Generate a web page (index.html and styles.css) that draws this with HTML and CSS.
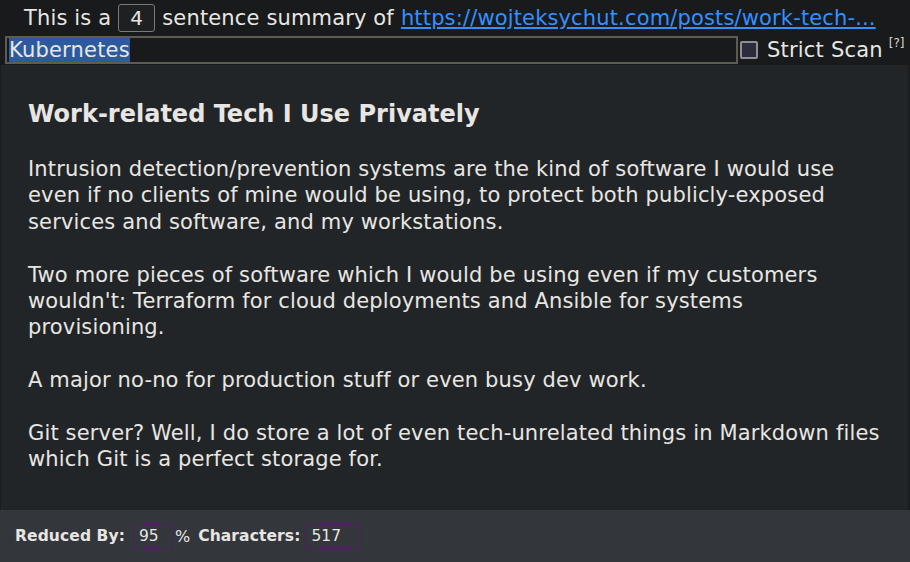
FILE: index.html
```html
<!DOCTYPE html>
<html>
<head>
<meta charset="utf-8">
<link rel="stylesheet" href="styles.css">
</head>
<body>
<div class="app">
  <div class="top">
    <span>This is a</span>
    <span class="num">4</span>
    <span>sentence summary of</span>
    <a class="link" href="#">https://wojteksychut.com/posts/work-tech-...</a>
  </div>
  <div class="search-row">
    <div class="search"><span class="sel">Kubernetes</span></div>
    <span class="check"></span>
    <span class="strict">Strict Scan</span>
    <sup class="help">[?]</sup>
  </div>
  <main class="panel">
    <h2 class="title">Work-related Tech I Use Privately</h2>
    <p>Intrusion detection/prevention systems are the kind of software I would use even if no clients of mine would be using, to protect both publicly-exposed services and software, and my workstations.</p>
    <p>Two more pieces of software which I would be using even if my customers wouldn't: Terraform for cloud deployments and Ansible for systems provisioning.</p>
    <p>A major no-no for production stuff or even busy dev work.</p>
    <p>Git server? Well, I do store a lot of even tech-unrelated things in Markdown files which Git is a perfect storage for.</p>
  </main>
  <footer class="footer">
    <span class="lbl">Reduced By:</span>
    <span class="box b1">95</span>
    <span class="pct">%</span>
    <span class="lbl">Characters:</span>
    <span class="box b2">517</span>
  </footer>
</div>
</body>
</html>
```
FILE: styles.css
```css
html, body {
  margin: 0;
  padding: 0;
  background: #181a1b;
  color: #e8e6e3;
  font-family: "DejaVu Sans", Verdana, sans-serif;
  overflow: hidden;
}
.app {
  width: 910px;
  height: 562px;
  display: flex;
  flex-direction: column;
}
.top {
  height: 35px;
  display: flex;
  align-items: center;
  gap: 7px;
  padding-left: 24px;
  font-size: 21px;
  letter-spacing: 0.15px;
  white-space: nowrap;
}
.num {
  width: 35px;
  height: 26px;
  border: 1px solid #7a7a7a;
  border-radius: 3px;
  background: #1e2022;
  display: flex;
  align-items: center;
  justify-content: center;
  font-size: 20px;
}
.link {
  color: #3391ff;
  text-decoration: underline;
}
.search-row {
  height: 30px;
  display: flex;
  align-items: center;
  padding-left: 5px;
  font-size: 21px;
}
.search {
  width: 727px;
  height: 24px;
  border: 2px solid #5f5b52;
  background: #181a1b;
  display: flex;
  align-items: center;
  padding-left: 2px;
}
.sel {
  background: #2d5a9e;
  color: #e8e6e3;
  line-height: 24px;
  letter-spacing: 0.2px;
}
.check {
  width: 14px;
  height: 14px;
  border: 2px solid #8e8e96;
  border-radius: 2px;
  background: #2c2c3c;
  margin-left: 2px;
  margin-right: 9px;
}
.strict {
  font-size: 21px;
  letter-spacing: 0.2px;
}
.help {
  font-size: 12px;
  margin-left: 6px;
  align-self: flex-start;
  margin-top: 1px;
  color: #d8d6d3;
}
.panel {
  flex: 1;
  background: #222527;
  padding: 35px 27px 0 27px;
  border-left: 1px solid #1a1c1d;
  border-right: 2px solid #1a1c1d;
}
.title {
  font-size: 24px;
  line-height: 28px;
  font-weight: bold;
  margin: 0 0 28px 0;
}
.panel p {
  font-size: 21px;
  line-height: 26.4px;
  letter-spacing: 0.15px;
  margin: 0 0 26.4px 0;
  width: 856px;
}
.footer {
  height: 52px;
  background: #33363b;
  display: flex;
  align-items: center;
  padding-left: 15px;
  font-size: 15.5px;
}
.lbl {
  font-weight: bold;
  letter-spacing: 0.1px;
}
.box {
  border: 1px solid #4b1f5a;
  display: flex;
  align-items: center;
  padding-left: 5px;
  box-sizing: border-box;
  height: 25px;
  margin-left: 7px;
}
.b1 { width: 40px; margin-left: 8px; }
.b2 { width: 57px; margin-left: 5px; }
.pct { margin: 0 8px 0 2px; font-size: 16px; }
```
